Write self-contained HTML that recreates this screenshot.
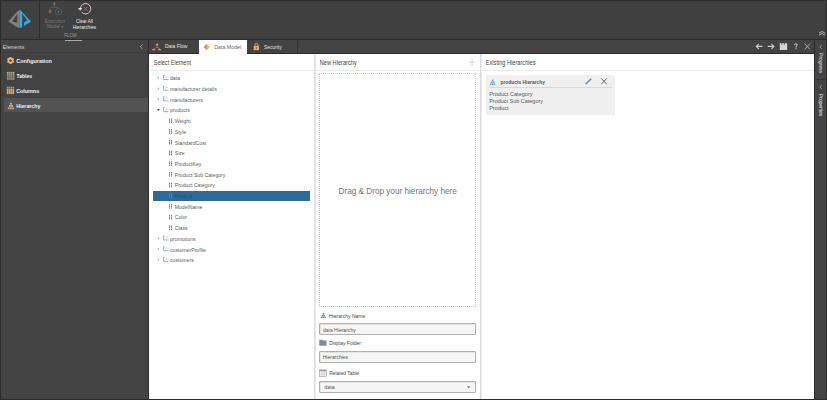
<!DOCTYPE html>
<html><head><meta charset="utf-8">
<style>
html,body{margin:0;padding:0;}
body{width:827px;height:400px;position:relative;overflow:hidden;background:#2c2c2c;font-family:"Liberation Sans", sans-serif;}
.b{position:absolute;}
.t{position:absolute;line-height:1;white-space:nowrap;font-family:"Liberation Sans", sans-serif;}
svg{position:absolute;overflow:visible;}
</style></head><body>
<!-- toolbar -->
<div class="b" style="left:1px;top:1px;width:825px;height:38px;background:#404040"></div>
<div class="b" style="left:39px;top:1px;width:1px;height:37px;background:#2e2e2e"></div>
<!-- left panel -->
<div class="b" style="left:1px;top:40px;width:147px;height:359px;background:#434343"></div>
<div class="b" style="left:1px;top:52px;width:147px;height:1px;background:#3a3a3a"></div>
<div class="b" style="left:65px;top:40px;width:17px;height:1px;background:#ababab"></div>
<div class="b" style="left:4px;top:98px;width:144px;height:14px;background:#535353"></div>
<!-- tab row -->
<div class="b" style="left:149px;top:40px;width:665px;height:13px;background:#434343"></div>
<div class="b" style="left:199px;top:40px;width:48px;height:14px;background:#ffffff"></div>
<div class="b" style="left:297px;top:40px;width:1px;height:13px;background:#333"></div>
<!-- content -->
<div class="b" style="left:149px;top:54px;width:665px;height:345px;background:#ffffff"></div>
<div class="b" style="left:149px;top:70px;width:665px;height:1px;background:#e9ebed"></div>
<div class="b" style="left:314px;top:54px;width:2px;height:345px;background:linear-gradient(90deg,#d9dce0 50%,#e9ebee 50%)"></div>
<div class="b" style="left:480px;top:54px;width:2px;height:345px;background:linear-gradient(90deg,#d9dce0 50%,#e9ebee 50%)"></div>
<!-- right rail -->
<div class="b" style="left:815px;top:40px;width:11px;height:359px;background:#434343"></div>
<div class="b" style="left:815px;top:79px;width:11px;height:1px;background:#333"></div>

<!-- tree selected -->
<div class="b" style="left:153px;top:191px;width:157px;height:10px;background:#2c6a9b"></div>

<!-- dashed drop box -->
<div class="b" style="left:319px;top:73px;width:155px;height:232px;border:1px dotted #c6c6c6"></div>

<!-- inputs -->
<div class="b" style="left:319px;top:323px;width:155px;height:10px;border:1px solid #b0b0b0;border-radius:1px;background:#f5f5f5;box-shadow:inset 1px 1px 0 #e4e4e4"></div>
<div class="b" style="left:319px;top:351px;width:155px;height:10px;border:1px solid #b0b0b0;border-radius:1px;background:#f5f5f5;box-shadow:inset 1px 1px 0 #e4e4e4"></div>
<div class="b" style="left:319px;top:381px;width:155px;height:10px;border:1px solid #b0b0b0;border-radius:1px;background:#f5f5f5;box-shadow:inset 1px 1px 0 #e4e4e4"></div>

<!-- card -->
<div class="b" style="left:486px;top:75px;width:129px;height:40px;background:#f0f0f0"></div>
<div class="b" style="left:489px;top:87px;width:123px;height:1px;background:#d9d9d9"></div>

<div class="t" style="left:45.10px;top:19.76px;font-size:4.531px;color:#7c7c7c;transform:scaleY(1.192);transform-origin:0 3.84px;">Execution</div>
<div class="t" style="left:46.90px;top:25.36px;font-size:4.771px;color:#7c7c7c;transform:scaleY(1.132);transform-origin:0 4.04px;">Model</div>
<div class="t" style="left:75.90px;top:19.81px;font-size:4.591px;color:#ececec;transform:scaleY(1.176);transform-origin:0 3.89px;">Clear All</div>
<div class="t" style="left:72.70px;top:25.57px;font-size:4.646px;color:#ececec;transform:scaleY(1.162);transform-origin:0 3.93px;">Hierarchies</div>
<div class="t" style="left:64.25px;top:34.16px;font-size:4.413px;color:#9a9a9a;transform:scaleY(1.297);transform-origin:0 3.74px;">FLOW</div>
<div class="t" style="left:2.80px;top:45.41px;font-size:5.181px;color:#d8d8d8;transform:scaleY(1.126);transform-origin:0 4.39px;">Elements</div>
<div class="t" style="left:16.30px;top:59.20px;font-size:5.431px;color:#f2f2f2;font-weight:bold;transform:scaleY(1.153);transform-origin:0 4.60px;">Configuration</div>
<div class="t" style="left:16.50px;top:74.26px;font-size:5.010px;color:#f2f2f2;font-weight:bold;transform:scaleY(1.250);transform-origin:0 4.24px;">Tables</div>
<div class="t" style="left:16.20px;top:89.35px;font-size:5.376px;color:#f2f2f2;font-weight:bold;transform:scaleY(1.165);transform-origin:0 4.55px;">Columns</div>
<div class="t" style="left:16.20px;top:104.34px;font-size:5.267px;color:#f2f2f2;font-weight:bold;transform:scaleY(1.189);transform-origin:0 4.46px;">Hierarchy</div>
<div class="t" style="left:164.90px;top:45.29px;font-size:4.976px;color:#e2e2e2;transform:scaleY(1.085);transform-origin:0 4.21px;">Data Flow</div>
<div class="t" style="left:214.30px;top:45.45px;font-size:5.260px;color:#6a6a6a;transform:scaleY(1.027);transform-origin:0 4.45px;">Data Model</div>
<div class="t" style="left:264.00px;top:44.98px;font-size:4.983px;color:#e2e2e2;transform:scaleY(1.084);transform-origin:0 4.22px;">Security</div>
<div class="t" style="left:153.75px;top:60.89px;font-size:5.560px;color:#444;transform:scaleY(1.204);transform-origin:0 4.71px;">Select Element</div>
<div class="t" style="left:319.80px;top:60.82px;font-size:5.642px;color:#444;transform:scaleY(1.187);transform-origin:0 4.78px;">New Hierarchy</div>
<div class="t" style="left:485.80px;top:60.83px;font-size:5.635px;color:#444;transform:scaleY(1.188);transform-origin:0 4.77px;">Existing Hierarchies</div>
<div class="t" style="left:170.00px;top:76.32px;font-size:5.170px;color:#5c5c5c;transform:scaleY(1.200);transform-origin:0 4.38px;">data</div>
<div class="t" style="left:170.00px;top:87.02px;font-size:5.170px;color:#5c5c5c;transform:scaleY(1.200);transform-origin:0 4.38px;">manufacturer details</div>
<div class="t" style="left:170.00px;top:97.72px;font-size:5.170px;color:#5c5c5c;transform:scaleY(1.200);transform-origin:0 4.38px;">manufacturers</div>
<div class="t" style="left:170.00px;top:108.42px;font-size:5.170px;color:#5c5c5c;transform:scaleY(1.200);transform-origin:0 4.38px;">products</div>
<div class="t" style="left:174.70px;top:119.12px;font-size:5.170px;color:#5c5c5c;transform:scaleY(1.200);transform-origin:0 4.38px;">Weight</div>
<div class="t" style="left:174.70px;top:129.82px;font-size:5.170px;color:#5c5c5c;transform:scaleY(1.200);transform-origin:0 4.38px;">Style</div>
<div class="t" style="left:174.70px;top:140.52px;font-size:5.170px;color:#5c5c5c;transform:scaleY(1.200);transform-origin:0 4.38px;">StandardCost</div>
<div class="t" style="left:174.70px;top:151.22px;font-size:5.170px;color:#5c5c5c;transform:scaleY(1.200);transform-origin:0 4.38px;">Size</div>
<div class="t" style="left:174.70px;top:161.92px;font-size:5.170px;color:#5c5c5c;transform:scaleY(1.200);transform-origin:0 4.38px;">ProductKey</div>
<div class="t" style="left:174.70px;top:172.62px;font-size:5.170px;color:#5c5c5c;transform:scaleY(1.200);transform-origin:0 4.38px;">Product Sub Category</div>
<div class="t" style="left:174.70px;top:183.32px;font-size:5.170px;color:#5c5c5c;transform:scaleY(1.200);transform-origin:0 4.38px;">Product Category</div>
<div class="t" style="left:174.70px;top:194.02px;font-size:5.170px;color:#2a4a66;transform:scaleY(1.200);transform-origin:0 4.38px;">Product</div>
<div class="t" style="left:174.70px;top:204.72px;font-size:5.170px;color:#5c5c5c;transform:scaleY(1.200);transform-origin:0 4.38px;">ModelName</div>
<div class="t" style="left:174.70px;top:215.42px;font-size:5.170px;color:#5c5c5c;transform:scaleY(1.200);transform-origin:0 4.38px;">Color</div>
<div class="t" style="left:174.70px;top:226.12px;font-size:5.170px;color:#5c5c5c;transform:scaleY(1.200);transform-origin:0 4.38px;">Class</div>
<div class="t" style="left:170.00px;top:236.82px;font-size:5.170px;color:#5c5c5c;transform:scaleY(1.200);transform-origin:0 4.38px;">promotions</div>
<div class="t" style="left:170.00px;top:247.52px;font-size:5.170px;color:#5c5c5c;transform:scaleY(1.200);transform-origin:0 4.38px;">customerProfile</div>
<div class="t" style="left:170.00px;top:258.22px;font-size:5.170px;color:#5c5c5c;transform:scaleY(1.200);transform-origin:0 4.38px;">customers</div>
<div class="t" style="left:338.50px;top:187.86px;font-size:8.200px;color:#747474;transform:scaleY(1.093);transform-origin:0 6.94px;">Drag &amp; Drop your hierarchy here</div>
<div class="t" style="left:328.90px;top:313.51px;font-size:5.066px;color:#474747;transform:scaleY(1.237);transform-origin:0 4.29px;">Hierarchy Name</div>
<div class="t" style="left:322.90px;top:328.22px;font-size:5.059px;color:#555;transform:scaleY(1.174);transform-origin:0 4.28px;">data Hierarchy</div>
<div class="t" style="left:329.20px;top:341.69px;font-size:4.975px;color:#474747;transform:scaleY(1.259);transform-origin:0 4.21px;">Display Folder</div>
<div class="t" style="left:322.70px;top:355.33px;font-size:5.042px;color:#555;transform:scaleY(1.178);transform-origin:0 4.27px;">Hierarchies</div>
<div class="t" style="left:329.20px;top:372.24px;font-size:4.919px;color:#474747;transform:scaleY(1.273);transform-origin:0 4.16px;">Related Table</div>
<div class="t" style="left:324.20px;top:385.13px;font-size:5.393px;color:#555;transform:scaleY(1.101);transform-origin:0 4.57px;">data</div>
<div class="t" style="left:500.50px;top:81.09px;font-size:4.853px;color:#555555;font-weight:bold;transform:scaleY(1.224);transform-origin:0 4.11px;">products Hierarchy</div>
<div class="t" style="left:489.20px;top:92.17px;font-size:5.589px;color:#585858;transform:scaleY(1.121);transform-origin:0 4.73px;">Product Category</div>
<div class="t" style="left:489.20px;top:99.15px;font-size:5.488px;color:#585858;transform:scaleY(1.141);transform-origin:0 4.65px;">Product Sub Category</div>
<div class="t" style="left:489.20px;top:106.14px;font-size:5.628px;color:#585858;transform:scaleY(1.113);transform-origin:0 4.76px;">Product</div>

<!-- ICONS -->
<svg style="left:0;top:0" width="827" height="400" viewBox="0 0 827 400">
  <!-- logo -->
  <path fill="#7f7f7f" fill-rule="evenodd" d="M17.2 11.6 L19.75 9.7 L19.75 27.7 L17.5 27.6 L8.4 21.6 Z M17.2 14.0 L12.3 21.5 L17.2 22.7 Z"/>
  <path fill="#22b1e3" d="M19.75 9.5 L31 21.6 L23.9 25.9 L23.9 22.6 L27.3 20.4 L22.2 13.6 L22.2 27.5 L19.75 27.8 Z"/>
  <!-- exec model icon (disabled) -->
  <path d="M54.4 2.3 L55.9 3.8 L54.4 5.3 L52.9 3.8Z" fill="#8f7254"/>
  <path d="M54.4 5.3 V7.5 M50.1 10 V7.5 H58.5 V8.5" stroke="#686868" stroke-width="0.6" fill="none"/>
  <rect x="48.8" y="10.1" width="2.7" height="2.7" fill="#85694d"/>
  <path d="M58.5 8.4 L61.4 10.05 L61.4 13.35 L58.5 15 L55.6 13.35 L55.6 10.05Z" stroke="#38607c" stroke-width="0.9" fill="none"/>
  <rect x="57.8" y="11" width="1.4" height="1.4" fill="#85694d"/>
  <!-- clear all icon -->
  <path d="M80.4 8.4 A5.2 5.2 0 1 1 81.7 12.2" stroke="#d6d6d6" stroke-width="0.9" fill="none"/>
  <path d="M77.9 8.1 L82.5 8.1 L80.3 10.7Z" fill="#d6d6d6"/>
  <path d="M83.7 6.8 L87.7 10.8 M87.7 6.8 L83.7 10.8" stroke="#c4574a" stroke-width="0.95" fill="none"/>
  <!-- model caret -->
  <path d="M61.2 26.2 L63.8 26.2 L62.5 27.8Z" fill="#7c7c7c"/>
  <!-- elements collapse < -->
  <path d="M142.6 44.5 L140.3 46.7 L142.6 48.9" stroke="#b8b8b8" stroke-width="0.7" fill="none"/>
  <!-- gear -->
  <g transform="translate(10.57 60.5)" fill="#f2b778">
    <path fill-rule="evenodd" d="M0 -2.9 A2.9 2.9 0 1 1 -0.01 -2.9Z M0 -1.25 A1.25 1.25 0 1 0 0.01 -1.25Z"/>
    <rect x="-0.95" y="-3.6" width="1.9" height="1.4" rx="0.4" transform="rotate(0)"/>
    <rect x="-0.95" y="-3.6" width="1.9" height="1.4" rx="0.4" transform="rotate(60)"/>
    <rect x="-0.95" y="-3.6" width="1.9" height="1.4" rx="0.4" transform="rotate(120)"/>
    <rect x="-0.95" y="-3.6" width="1.9" height="1.4" rx="0.4" transform="rotate(180)"/>
    <rect x="-0.95" y="-3.6" width="1.9" height="1.4" rx="0.4" transform="rotate(240)"/>
    <rect x="-0.95" y="-3.6" width="1.9" height="1.4" rx="0.4" transform="rotate(300)"/>
  </g>
  <!-- tables icon -->
  <g>
    <rect x="6.9" y="71.9" width="7.5" height="1.7" fill="#e7a766"/>
    <rect x="6.9" y="73.9" width="7.5" height="5.8" fill="#9a9a9a"/>
    <path d="M8.7 71.9 V79.7 M10.6 71.9 V79.7 M12.5 71.9 V79.7 M6.9 75.8 H14.4 M6.9 77.7 H14.4" stroke="#434343" stroke-width="0.45"/>
  </g>
  <!-- columns icon -->
  <g>
    <rect x="6.8" y="86.8" width="7.3" height="1.6" fill="#9a9a9a"/>
    <rect x="6.8" y="88.7" width="7.3" height="5.4" fill="#e7a766"/>
    <path d="M8.6 86.8 V94.1 M10.45 86.8 V94.1 M12.3 86.8 V94.1" stroke="#434343" stroke-width="0.45"/>
  </g>
  <!-- hierarchy icon (left) -->
  <g>
    <rect x="10.0" y="102.9" width="1.9" height="1.8" fill="#e7a766"/>
    <rect x="8.9" y="105.0" width="1.9" height="1.8" fill="#e7a766"/>
    <rect x="11.1" y="105.0" width="1.9" height="1.8" fill="#e7a766"/>
    <rect x="7.8" y="107.3" width="1.9" height="1.9" fill="#a8a8a8"/>
    <rect x="10.0" y="107.3" width="1.9" height="1.9" fill="#a8a8a8"/>
    <rect x="12.2" y="107.3" width="1.9" height="1.9" fill="#a8a8a8"/>
  </g>
  <!-- data flow icon -->
  <g fill="#f0a75c">
    <path d="M157.1 43.3 L158.5 44.7 L157.1 46.1 L155.7 44.7Z"/>
    <path d="M157.1 46 V47.6 M154 48.7 L157.1 47.3 L160 48.7" stroke="#c89868" stroke-width="0.5" fill="none"/>
    <path d="M152 50.3 A1.6 1.5 0 0 1 155.2 50.3Z"/>
    <path d="M158 50.3 A1.6 1.5 0 0 1 161.2 50.3Z"/>
  </g>
  <!-- data model pyramid -->
  <path d="M206.7 43.8 L209.9 47.2 L206.7 49.9 L203.6 47.2Z" fill="#e0b57a"/>
  <path d="M206.7 43.8 L206.7 49.9 L203.6 47.2Z" fill="#c89a62"/>
  <!-- lock -->
  <path d="M255 45.9 V44.8 A1.45 1.45 0 0 1 257.9 44.8 V45.9" stroke="#dcaa72" stroke-width="0.9" fill="none"/>
  <rect x="253.7" y="45.8" width="5.4" height="4.4" fill="#dcaa72"/>
  <rect x="256.1" y="47.2" width="0.7" height="1.6" fill="#5a4a3a"/>
  <!-- right tab icons -->
  <path d="M762.5 46.4 H756.3 M758.8 43.9 L756.3 46.4 L758.8 48.9" stroke="#cfcfcf" stroke-width="1.1" fill="none"/>
  <path d="M767.7 46.4 H773.9 M771.4 43.9 L773.9 46.4 L771.4 48.9" stroke="#cfcfcf" stroke-width="1.1" fill="none"/>
  <path d="M779.8 43 H786.1 L787.2 44.1 V50 H779.8Z" fill="#d4d4d4"/>
  <rect x="781.3" y="43" width="1" height="1.5" fill="#434343"/>
  <rect x="783.8" y="43" width="1.1" height="1.5" fill="#434343"/>
  <path d="M804.6 43.6 L810 49.4 M810 43.6 L804.6 49.4" stroke="#bdbdbd" stroke-width="0.8" fill="none"/>
  <!-- double chevron top right -->
  <path d="M819 33.1 L822 31.5 L825 33.1 M819 35.1 L822 33.5 L825 35.1" stroke="#cfcfcf" stroke-width="0.8" fill="none"/>
  <!-- rail chevrons -->
  <path d="M821.8 45 L819.8 47 L821.8 49" stroke="#b8b8b8" stroke-width="0.7" fill="none"/>
  <path d="M821.8 85 L819.8 87 L821.8 89" stroke="#b8b8b8" stroke-width="0.7" fill="none"/>
  <!-- plus -->
  <path d="M472.1 59 V65.8 M468.8 62.3 H475.4" stroke="#d2d8de" stroke-width="1.1" fill="none"/>
  <!-- hierarchy name icon -->
  <g fill="#3c88c6">
    <rect x="322.7" y="313.1" width="1.6" height="1.5"/>
    <rect x="321.8" y="315" width="1.5" height="1.3"/>
    <rect x="323.6" y="315" width="1.5" height="1.3"/>
    <rect x="320.9" y="316.6" width="1.5" height="1.3"/>
    <rect x="322.7" y="316.6" width="1.5" height="1.3"/>
    <rect x="324.4" y="316.6" width="1.5" height="1.3"/>
  </g>
  <!-- folder -->
  <path d="M319.3 339.7 H322.3 L323.2 340.6 H326.5 V345.7 H319.3Z" fill="#7b8c9b"/>
  <!-- table grid -->
  <g>
    <rect x="319.5" y="369.9" width="6.8" height="6.4" fill="none" stroke="#9a9a9a" stroke-width="0.6"/>
    <rect x="319.5" y="369.9" width="6.8" height="1.4" fill="#9a9a9a"/>
    <path d="M321.8 371 V376.3 M324 371 V376.3 M319.5 373 H326.3 M319.5 374.7 H326.3" stroke="#b0b0b0" stroke-width="0.45"/>
  </g>
  <!-- dropdown arrow -->
  <path d="M466.8 386.2 H470.5 L468.65 388.3Z" fill="#777"/>
  <!-- card hierarchy icon -->
  <g fill="#5aa2da">
    <rect x="491.8" y="79.6" width="1.7" height="1.6"/>
    <rect x="490.8" y="81.6" width="1.7" height="1.5"/>
    <rect x="492.7" y="81.6" width="1.7" height="1.5"/>
    <rect x="489.9" y="83.5" width="1.6" height="1.5"/>
    <rect x="491.8" y="83.5" width="1.6" height="1.5"/>
    <rect x="493.6" y="83.5" width="1.6" height="1.5"/>
  </g>
  <!-- pencil -->
  <path d="M586 83.7 L591 79.1" stroke="#3d8fd0" stroke-width="1.3" stroke-linecap="round"/>
  <!-- card X -->
  <path d="M601.3 78.4 L606.8 84.2 M606.8 78.4 L601.3 84.2" stroke="#5a5a5a" stroke-width="0.9"/>
  <path d="M794.6 45.1 Q794.6 43.8 795.9 43.8 Q797.2 43.8 797.2 45 Q797.2 45.9 796 46.4 V47.6" stroke="#d4d4d4" stroke-width="0.95" fill="none"/>
  <rect x="795.5" y="48.3" width="1" height="1" fill="#d4d4d4"/>
  <path d="M157.8 76.50 L159.2 77.75 L157.8 79.00Z" fill="#9a9a9a"/>
<path d="M163.6 75.20 V79.50 H168.4" stroke="#84b6da" stroke-width="0.95" fill="none"/>
<path d="M163.1 75.50 H164.6" stroke="#84b6da" stroke-width="0.8" fill="none"/>
<path d="M165.6 78.00 L166.6 76.20 L167.6 77.20" stroke="#a8a8a8" stroke-width="0.5" fill="none"/>
<path d="M157.8 87.20 L159.2 88.45 L157.8 89.70Z" fill="#9a9a9a"/>
<path d="M163.6 85.90 V90.20 H168.4" stroke="#84b6da" stroke-width="0.95" fill="none"/>
<path d="M163.1 86.20 H164.6" stroke="#84b6da" stroke-width="0.8" fill="none"/>
<path d="M165.6 88.70 L166.6 86.90 L167.6 87.90" stroke="#a8a8a8" stroke-width="0.5" fill="none"/>
<path d="M157.8 97.90 L159.2 99.15 L157.8 100.40Z" fill="#9a9a9a"/>
<path d="M163.6 96.60 V100.90 H168.4" stroke="#84b6da" stroke-width="0.95" fill="none"/>
<path d="M163.1 96.90 H164.6" stroke="#84b6da" stroke-width="0.8" fill="none"/>
<path d="M165.6 99.40 L166.6 97.60 L167.6 98.60" stroke="#a8a8a8" stroke-width="0.5" fill="none"/>
<path d="M156.8 108.90 H160 L158.4 110.90Z" fill="#555"/>
<path d="M163.6 107.30 V111.60 H168.4" stroke="#84b6da" stroke-width="0.95" fill="none"/>
<path d="M163.1 107.60 H164.6" stroke="#84b6da" stroke-width="0.8" fill="none"/>
<path d="M165.6 110.10 L166.6 108.30 L167.6 109.30" stroke="#a8a8a8" stroke-width="0.5" fill="none"/>
<rect x="169.00" y="118.45" width="1.1" height="1.35" fill="#4a8cc4"/>
<rect x="169.00" y="120.10" width="1.1" height="1.35" fill="#4a8cc4"/>
<rect x="169.00" y="121.75" width="1.1" height="1.35" fill="#4a8cc4"/>
<rect x="171.00" y="118.45" width="1.1" height="1.35" fill="#4a8cc4"/>
<rect x="171.00" y="120.10" width="1.1" height="1.35" fill="#4a8cc4"/>
<rect x="171.00" y="121.75" width="1.1" height="1.35" fill="#4a8cc4"/>
<rect x="169.00" y="129.15" width="1.1" height="1.35" fill="#4a8cc4"/>
<rect x="169.00" y="130.80" width="1.1" height="1.35" fill="#4a8cc4"/>
<rect x="169.00" y="132.45" width="1.1" height="1.35" fill="#4a8cc4"/>
<rect x="171.00" y="129.15" width="1.1" height="1.35" fill="#4a8cc4"/>
<rect x="171.00" y="130.80" width="1.1" height="1.35" fill="#4a8cc4"/>
<rect x="171.00" y="132.45" width="1.1" height="1.35" fill="#4a8cc4"/>
<rect x="169.00" y="139.85" width="1.1" height="1.35" fill="#4a8cc4"/>
<rect x="169.00" y="141.50" width="1.1" height="1.35" fill="#4a8cc4"/>
<rect x="169.00" y="143.15" width="1.1" height="1.35" fill="#4a8cc4"/>
<rect x="171.00" y="139.85" width="1.1" height="1.35" fill="#4a8cc4"/>
<rect x="171.00" y="141.50" width="1.1" height="1.35" fill="#4a8cc4"/>
<rect x="171.00" y="143.15" width="1.1" height="1.35" fill="#4a8cc4"/>
<rect x="169.00" y="150.55" width="1.1" height="1.35" fill="#4a8cc4"/>
<rect x="169.00" y="152.20" width="1.1" height="1.35" fill="#4a8cc4"/>
<rect x="169.00" y="153.85" width="1.1" height="1.35" fill="#4a8cc4"/>
<rect x="171.00" y="150.55" width="1.1" height="1.35" fill="#4a8cc4"/>
<rect x="171.00" y="152.20" width="1.1" height="1.35" fill="#4a8cc4"/>
<rect x="171.00" y="153.85" width="1.1" height="1.35" fill="#4a8cc4"/>
<rect x="169.00" y="161.25" width="1.1" height="1.35" fill="#4a8cc4"/>
<rect x="169.00" y="162.90" width="1.1" height="1.35" fill="#4a8cc4"/>
<rect x="169.00" y="164.55" width="1.1" height="1.35" fill="#4a8cc4"/>
<rect x="171.00" y="161.25" width="1.1" height="1.35" fill="#4a8cc4"/>
<rect x="171.00" y="162.90" width="1.1" height="1.35" fill="#4a8cc4"/>
<rect x="171.00" y="164.55" width="1.1" height="1.35" fill="#4a8cc4"/>
<rect x="169.00" y="171.95" width="1.1" height="1.35" fill="#4a8cc4"/>
<rect x="169.00" y="173.60" width="1.1" height="1.35" fill="#4a8cc4"/>
<rect x="169.00" y="175.25" width="1.1" height="1.35" fill="#4a8cc4"/>
<rect x="171.00" y="171.95" width="1.1" height="1.35" fill="#4a8cc4"/>
<rect x="171.00" y="173.60" width="1.1" height="1.35" fill="#4a8cc4"/>
<rect x="171.00" y="175.25" width="1.1" height="1.35" fill="#4a8cc4"/>
<rect x="169.00" y="182.65" width="1.1" height="1.35" fill="#4a8cc4"/>
<rect x="169.00" y="184.30" width="1.1" height="1.35" fill="#4a8cc4"/>
<rect x="169.00" y="185.95" width="1.1" height="1.35" fill="#4a8cc4"/>
<rect x="171.00" y="182.65" width="1.1" height="1.35" fill="#4a8cc4"/>
<rect x="171.00" y="184.30" width="1.1" height="1.35" fill="#4a8cc4"/>
<rect x="171.00" y="185.95" width="1.1" height="1.35" fill="#4a8cc4"/>
<rect x="169.00" y="193.35" width="1.1" height="1.35" fill="#4a8cc4"/>
<rect x="169.00" y="195.00" width="1.1" height="1.35" fill="#4a8cc4"/>
<rect x="169.00" y="196.65" width="1.1" height="1.35" fill="#4a8cc4"/>
<rect x="171.00" y="193.35" width="1.1" height="1.35" fill="#4a8cc4"/>
<rect x="171.00" y="195.00" width="1.1" height="1.35" fill="#4a8cc4"/>
<rect x="171.00" y="196.65" width="1.1" height="1.35" fill="#4a8cc4"/>
<rect x="169.00" y="204.05" width="1.1" height="1.35" fill="#4a8cc4"/>
<rect x="169.00" y="205.70" width="1.1" height="1.35" fill="#4a8cc4"/>
<rect x="169.00" y="207.35" width="1.1" height="1.35" fill="#4a8cc4"/>
<rect x="171.00" y="204.05" width="1.1" height="1.35" fill="#4a8cc4"/>
<rect x="171.00" y="205.70" width="1.1" height="1.35" fill="#4a8cc4"/>
<rect x="171.00" y="207.35" width="1.1" height="1.35" fill="#4a8cc4"/>
<rect x="169.00" y="214.75" width="1.1" height="1.35" fill="#4a8cc4"/>
<rect x="169.00" y="216.40" width="1.1" height="1.35" fill="#4a8cc4"/>
<rect x="169.00" y="218.05" width="1.1" height="1.35" fill="#4a8cc4"/>
<rect x="171.00" y="214.75" width="1.1" height="1.35" fill="#4a8cc4"/>
<rect x="171.00" y="216.40" width="1.1" height="1.35" fill="#4a8cc4"/>
<rect x="171.00" y="218.05" width="1.1" height="1.35" fill="#4a8cc4"/>
<rect x="169.00" y="225.45" width="1.1" height="1.35" fill="#4a8cc4"/>
<rect x="169.00" y="227.10" width="1.1" height="1.35" fill="#4a8cc4"/>
<rect x="169.00" y="228.75" width="1.1" height="1.35" fill="#4a8cc4"/>
<rect x="171.00" y="225.45" width="1.1" height="1.35" fill="#4a8cc4"/>
<rect x="171.00" y="227.10" width="1.1" height="1.35" fill="#4a8cc4"/>
<rect x="171.00" y="228.75" width="1.1" height="1.35" fill="#4a8cc4"/>
<path d="M157.8 237.00 L159.2 238.25 L157.8 239.50Z" fill="#9a9a9a"/>
<path d="M163.6 235.70 V240.00 H168.4" stroke="#84b6da" stroke-width="0.95" fill="none"/>
<path d="M163.1 236.00 H164.6" stroke="#84b6da" stroke-width="0.8" fill="none"/>
<path d="M165.6 238.50 L166.6 236.70 L167.6 237.70" stroke="#a8a8a8" stroke-width="0.5" fill="none"/>
<path d="M157.8 247.70 L159.2 248.95 L157.8 250.20Z" fill="#9a9a9a"/>
<path d="M163.6 246.40 V250.70 H168.4" stroke="#84b6da" stroke-width="0.95" fill="none"/>
<path d="M163.1 246.70 H164.6" stroke="#84b6da" stroke-width="0.8" fill="none"/>
<path d="M165.6 249.20 L166.6 247.40 L167.6 248.40" stroke="#a8a8a8" stroke-width="0.5" fill="none"/>
<path d="M157.8 258.40 L159.2 259.65 L157.8 260.90Z" fill="#9a9a9a"/>
<path d="M163.6 257.10 V261.40 H168.4" stroke="#84b6da" stroke-width="0.95" fill="none"/>
<path d="M163.1 257.40 H164.6" stroke="#84b6da" stroke-width="0.8" fill="none"/>
<path d="M165.6 259.90 L166.6 258.10 L167.6 259.10" stroke="#a8a8a8" stroke-width="0.5" fill="none"/>
</svg>

<div class="t" style="left:820.3px;top:62.5px;font-size:5.2px;color:#e2e2e2;transform:translate(-50%,-50%) rotate(90deg);letter-spacing:-0.1px">Progress</div>
<div class="t" style="left:820.3px;top:104.5px;font-size:5.2px;color:#e2e2e2;transform:translate(-50%,-50%) rotate(90deg);letter-spacing:-0.1px">Properties</div>
</body></html>
